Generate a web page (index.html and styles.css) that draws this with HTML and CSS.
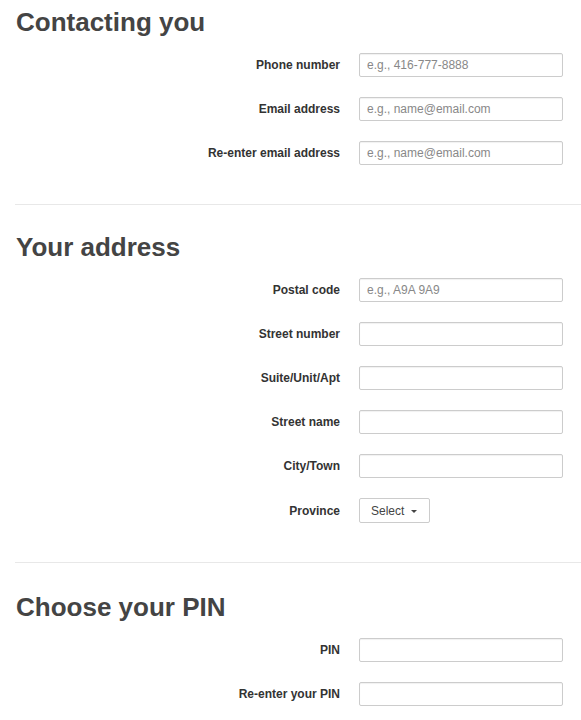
FILE: index.html
```html
<!DOCTYPE html>
<html lang="en">
<head>
    <meta charset="UTF-8">
    <meta name="viewport" content="width=device-width, initial-scale=1.0">
    <title>Registration</title>
    <link rel="stylesheet" href="styles.css">
</head>
<body>
    <div class="section">
        <h2>Contacting you</h2>
        <div class="fields">
            <label for="phone">Phone number</label>
            <input type="text" id="phone" placeholder="e.g., 416-777-8888">
            <label for="email">Email address</label>
            <input type="email" id="email" placeholder="e.g., name@email.com">
            <label for="email2">Re-enter email address</label>
            <input type="email" id="email2" placeholder="e.g., name@email.com">
        </div>
    </div>
    <div class="section">
        <h2>Your address</h2>
        <div class="fields">
            <label for="postal">Postal code</label>
            <input type="text" id="postal" placeholder="e.g., A9A 9A9">
            <label for="street_num">Street number</label>
            <input type="text" id="street_num">
            <label for="suite">Suite/Unit/Apt</label>
            <input type="text" id="suite">
            <label for="street">Street name</label>
            <input type="text" id="street">
            <label for="city">City/Town</label>
            <input type="text" id="city">
            <label>Province</label>
            <div><button type="button" class="select-btn">Select <span class="caret"></span></button></div>
        </div>
    </div>
    <div class="section">
        <h2>Choose your PIN</h2>
        <div class="fields">
            <label for="pin">PIN</label>
            <input type="password" id="pin">
            <label for="pin2">Re-enter your PIN</label>
            <input type="password" id="pin2">
        </div>
    </div>
</body>
</html>
```
FILE: styles.css
```css
body {
    font-family: "Liberation Sans", Arial, sans-serif;
    margin: 0;
    padding: 7px 0 0 15px;
    background-color: white;
    color: #333;
}
.section {
    padding: 27px 0 39px 0;
    border-bottom: 1px solid #e8e8e8;
}
.section:first-child {
    padding-top: 0;
}
.section:last-child {
    padding-top: 29px;
    border-bottom: none;
}
h2 {
    margin: 0 0 16px 1px;
    font-size: 26px;
    line-height: 30px;
    font-weight: bold;
    color: #444;
}
.fields {
    display: grid;
    grid-template-columns: 1fr 204px;
    column-gap: 19px;
    row-gap: 20px;
    align-items: center;
    padding-right: 18px;
}
label {
    text-align: right;
    font-size: 12px;
    font-weight: bold;
    color: #333;
}
input[type="text"],
input[type="email"],
input[type="password"] {
    width: 100%;
    height: 24px;
    padding: 0 7px;
    border: 1px solid #ccc;
    border-radius: 2px;
    box-shadow: inset 0 1px 1px rgba(0, 0, 0, 0.06);
    box-sizing: border-box;
    font-family: inherit;
    font-size: 12px;
    color: #333;
}
input::placeholder {
    color: #888;
}
.select-btn {
    height: 25px;
    width: 71px;
    padding: 0 0 0 11px;
    text-align: left;
    background-color: white;
    border: 1px solid #ccc;
    border-radius: 2px;
    font-family: inherit;
    font-size: 12px;
    color: #444;
    cursor: pointer;
}
.caret {
    display: inline-block;
    width: 0;
    height: 0;
    margin-left: 3px;
    vertical-align: middle;
    border-left: 3px solid transparent;
    border-right: 3px solid transparent;
    border-top: 3px solid #444;
}
```
